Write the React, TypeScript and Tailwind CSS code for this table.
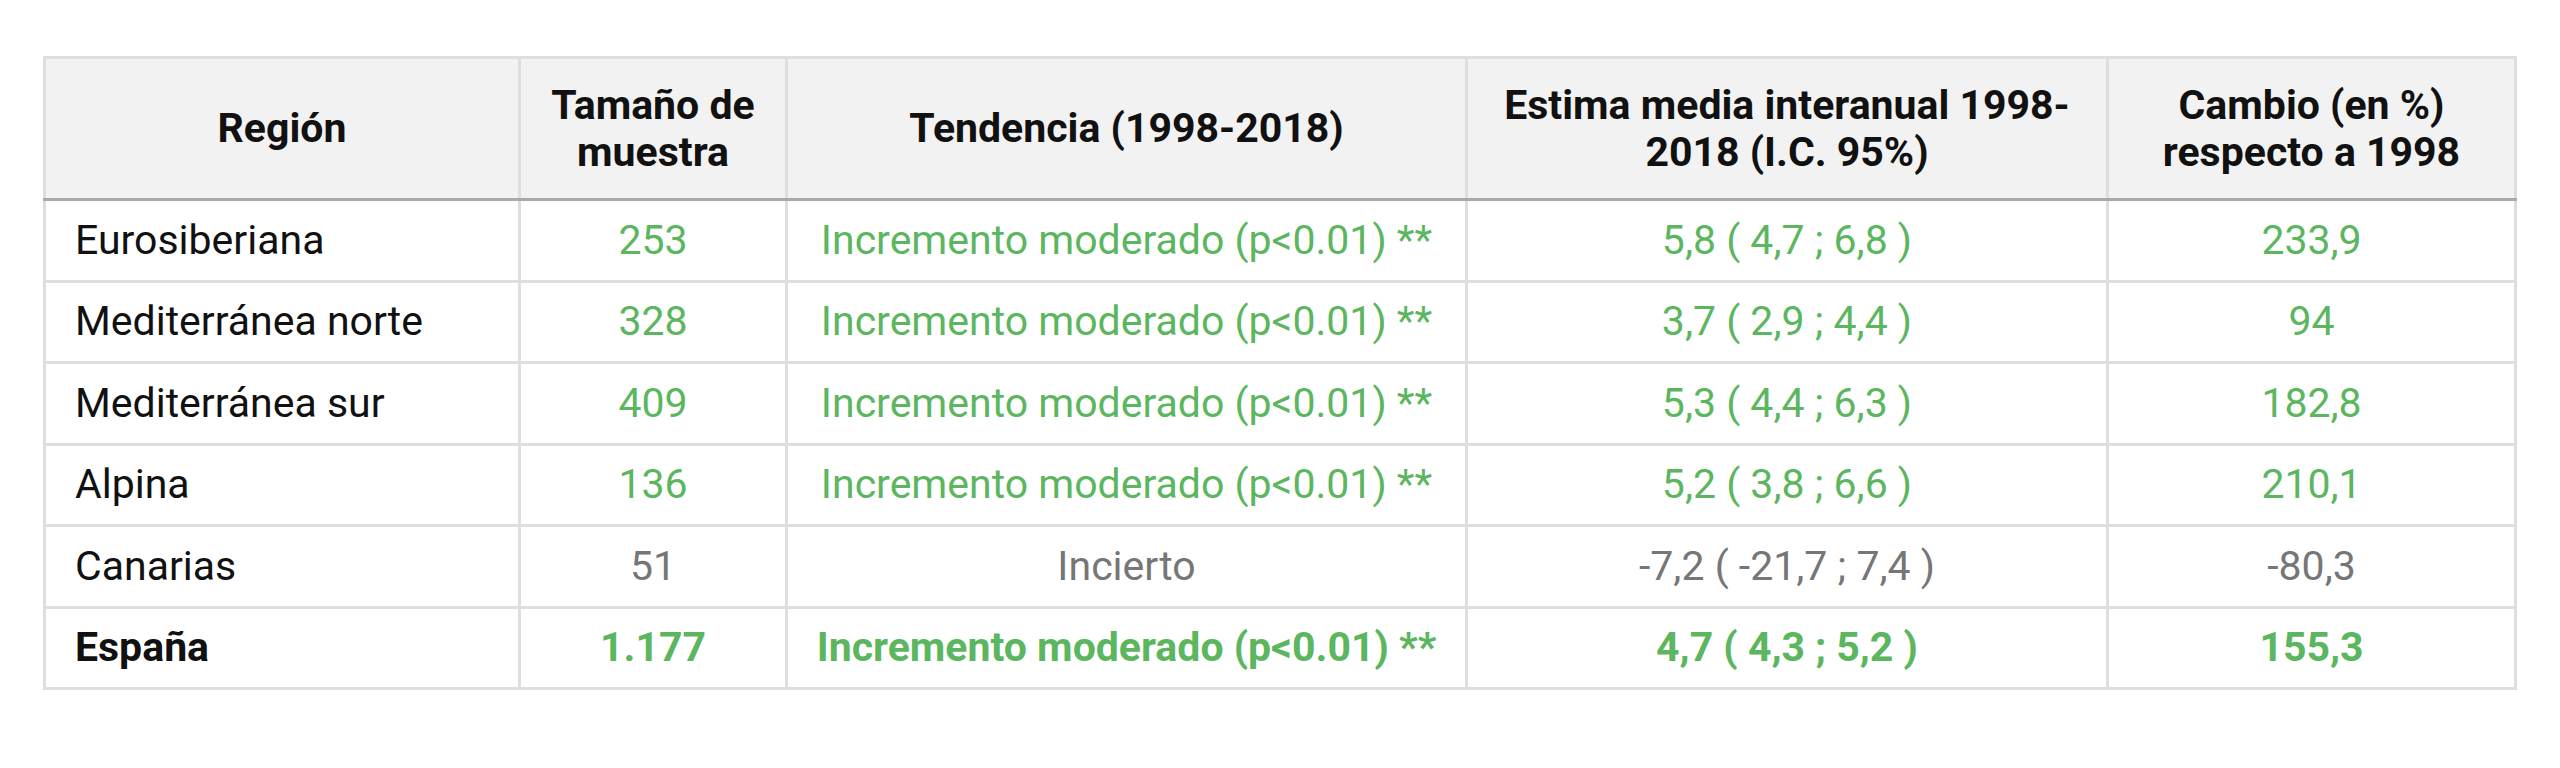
const rows = [
  { region: "Eurosiberiana", n: "253", trend: "Incremento moderado (p<0.01) **", est: "5,8 ( 4,7 ; 6,8 )", change: "233,9", tone: "green" },
  { region: "Mediterránea norte", n: "328", trend: "Incremento moderado (p<0.01) **", est: "3,7 ( 2,9 ; 4,4 )", change: "94", tone: "green" },
  { region: "Mediterránea sur", n: "409", trend: "Incremento moderado (p<0.01) **", est: "5,3 ( 4,4 ; 6,3 )", change: "182,8", tone: "green" },
  { region: "Alpina", n: "136", trend: "Incremento moderado (p<0.01) **", est: "5,2 ( 3,8 ; 6,6 )", change: "210,1", tone: "green" },
  { region: "Canarias", n: "51", trend: "Incierto", est: "-7,2 ( -21,7 ; 7,4 )", change: "-80,3", tone: "gray" },
  { region: "España", n: "1.177", trend: "Incremento moderado (p<0.01) **", est: "4,7 ( 4,3 ; 5,2 )", change: "155,3", tone: "total" },
];

const headers = [
  "Región",
  "Tamaño de muestra",
  "Tendencia (1998-2018)",
  "Estima media interanual 1998-2018 (I.C. 95%)",
  "Cambio (en %) respecto a 1998",
];

export default function App() {
  return (
    <div className="min-h-[768px] bg-white pl-[43px] pt-[56px] font-['Roboto',sans-serif]">
      <table className="w-[2471px] table-fixed border-collapse border-[3px] border-[#dedede] text-[41px]">
        <colgroup>
          <col className="w-[475px]" />
          <col className="w-[267px]" />
          <col className="w-[680px]" />
          <col className="w-[641px]" />
          <col className="w-[408px]" />
        </colgroup>
        <thead>
          <tr className="h-[142px] bg-[#f2f2f2]">
            {headers.map((h) => (
              <th
                key={h}
                className="border-[3px] border-b-[#a9a9a9] border-[#dedede] px-6 text-center align-middle font-bold leading-[47px] text-[#111]"
              >
                {h}
              </th>
            ))}
          </tr>
        </thead>
        <tbody>
          {rows.map((r) => {
            const valueColor = r.tone === "gray" ? "text-[#767676]" : "text-[#5cb660]";
            const weight = r.tone === "total" ? "font-bold" : "font-normal";

            return (
              <tr key={r.region} className="h-[81.5px] leading-[1.2]">
                <td className={`border-[3px] border-[#dedede] pl-[29px] text-left text-[#111] ${weight}`}>{r.region}</td>
                <td className={`border-[3px] border-[#dedede] text-center ${valueColor} ${weight}`}>{r.n}</td>
                <td className={`border-[3px] border-[#dedede] text-center ${valueColor} ${weight}`}>{r.trend}</td>
                <td className={`border-[3px] border-[#dedede] text-center ${valueColor} ${weight}`}>{r.est}</td>
                <td className={`border-[3px] border-[#dedede] text-center ${valueColor} ${weight}`}>{r.change}</td>
              </tr>
            );
          })}
        </tbody>
      </table>
    </div>
  );
}
